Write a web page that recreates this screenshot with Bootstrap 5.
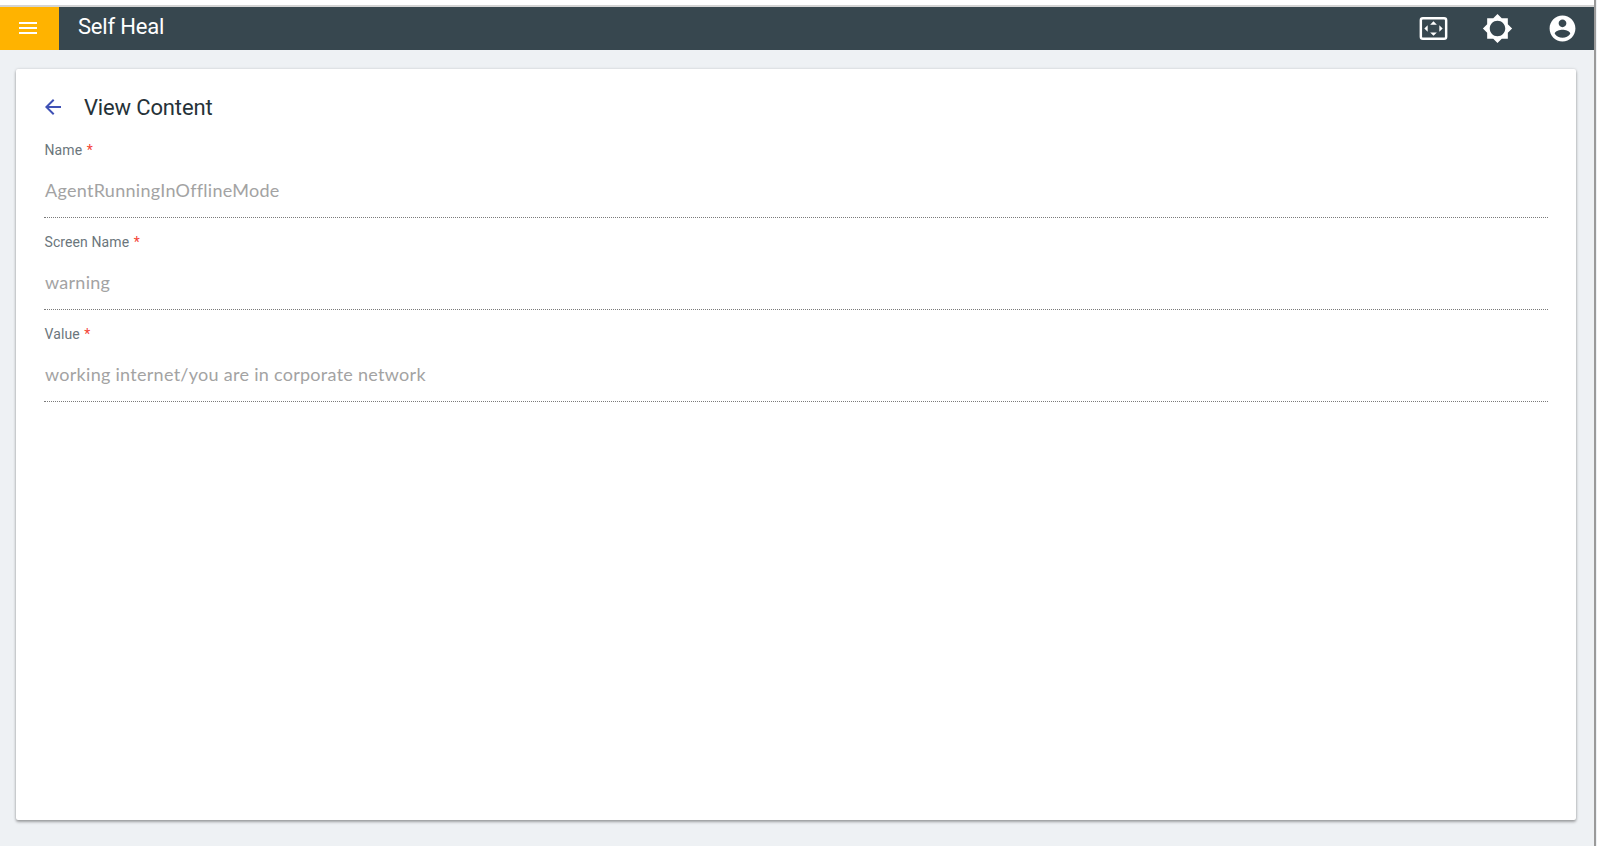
<!DOCTYPE html>
<html lang="en">
<head>
<meta charset="utf-8">
<title>Self Heal</title>
<link href="https://cdn.jsdelivr.net/npm/bootstrap@5.3.0/dist/css/bootstrap.min.css" rel="stylesheet">
<style>
html,body{height:100%;overflow:hidden}
body{background:#eef1f4;font-family:Roboto,sans-serif;padding-right:1px}
.page-shell{height:846px;border-right:2px solid #9a9a9a;display:flex;flex-direction:column}
.top-strip{height:7px;background:#fff;border-bottom:2px solid #d4d4d4;flex:none}
.app-bar{height:43px;background:#37474f;flex:none}
.menu-cell{width:59px;background:#ffb300;padding:0 4px 1px 0}
.app-title{font-size:22px;color:#fff;margin-left:19px;line-height:1;letter-spacing:-.2px;padding-bottom:3px}
.bar-icon{width:31px;height:31px;display:block}
.bar-icons{gap:33.5px;padding:0 16.5px 1px 0}
.sheet{margin:19px 18px 0 15.5px;height:751px;background:#fff;border-radius:2px;box-shadow:0 2px 3px rgba(0,0,0,.32),0 0 3px rgba(0,0,0,.14);padding:0 28px 0 28.5px}
.sheet-head{height:73px;gap:19px;padding-top:3px}
.back-arrow{margin-left:-3px}
.sheet-title{font-size:22px;color:#263238;letter-spacing:-.15px;line-height:1;padding-top:2px}
.field-name{display:block;font-size:14px;color:#6b767c;line-height:16px;margin:0;padding-left:.5px;letter-spacing:.1px}
.req-mark{color:#f44336;margin-left:1px}
.field-value{font-family:Lato,sans-serif;font-size:18px;color:#a3a3a3;line-height:24px;padding:20px 0 0 1px;height:60px;border-bottom:1px dotted #7a7a7a;letter-spacing:.28px}
.field-pad{height:92px}
</style>
</head>
<body>
<div class="page-shell">
  <div class="top-strip"></div>
  <nav class="app-bar d-flex align-items-center">
    <div class="menu-cell h-100 d-flex align-items-center justify-content-center">
      <svg width="24" height="24" viewBox="0 0 24 24" fill="#fff"><path d="M3 18h18v-2H3v2zm0-5h18v-2H3v2zm0-7v2h18V6H3z"/></svg>
    </div>
    <div class="app-title">Self Heal</div>
    <div class="bar-icons d-flex align-items-center ms-auto">
      <svg class="bar-icon" viewBox="0 0 24 24" fill="#fff"><rect x="2.2" y="4" width="19.6" height="16" rx="1.6" fill="none" stroke="#fff" stroke-width="1.9"/><path d="M12 6.400l2.600 2.600H9.400zM12 17.600L9.400 15h5.200zM4.900 12l2.600-2.600v5.200zM19.100 12l-2.600 2.600V9.400z"/></svg>
      <svg class="bar-icon" viewBox="0 0 24 24" fill="#fff"><path d="M20 8.69V4h-4.690L12 .69 8.690 4H4v4.690L.69 12 4 15.310V20h4.690L12 23.310 15.310 20H20v-4.690L23.310 12 20 8.690zM12 18c-3.310 0-6-2.690-6-6s2.690-6 6-6 6 2.690 6 6-2.690 6-6 6z"/></svg>
      <svg class="bar-icon" viewBox="0 0 24 24" fill="#fff"><path d="M12 2C6.480 2 2 6.480 2 12s4.480 10 10 10 10-4.480 10-10S17.520 2 12 2zm0 3c1.660 0 3 1.340 3 3s-1.340 3-3 3-3-1.340-3-3 1.340-3 3-3zm0 14.200c-2.500 0-4.710-1.280-6-3.220.03-1.990 4-3.080 6-3.080 1.990 0 5.970 1.090 6 3.080-1.290 1.940-3.500 3.220-6 3.220z"/></svg>
    </div>
  </nav>
  <main class="sheet">
    <div class="sheet-head d-flex align-items-center">
      <svg class="back-arrow" width="24" height="24" viewBox="0 0 24 24" fill="#3f51b5"><path d="M20 11H7.830l5.590-5.590L12 4l-8 8 8 8 1.410-1.410L7.830 13H20v-2z"/></svg>
      <div class="sheet-title">View Content</div>
    </div>
    <div class="field-pad">
      <label class="field-name">Name <span class="req-mark">*</span></label>
      <div class="field-value">AgentRunningInOfflineMode</div>
    </div>
    <div class="field-pad">
      <label class="field-name">Screen Name <span class="req-mark">*</span></label>
      <div class="field-value">warning</div>
    </div>
    <div class="field-pad">
      <label class="field-name">Value <span class="req-mark">*</span></label>
      <div class="field-value">working internet/you are in corporate network</div>
    </div>
  </main>
</div>
<script src="https://cdn.jsdelivr.net/npm/bootstrap@5.3.0/dist/js/bootstrap.bundle.min.js"></script>
</body>
</html>
